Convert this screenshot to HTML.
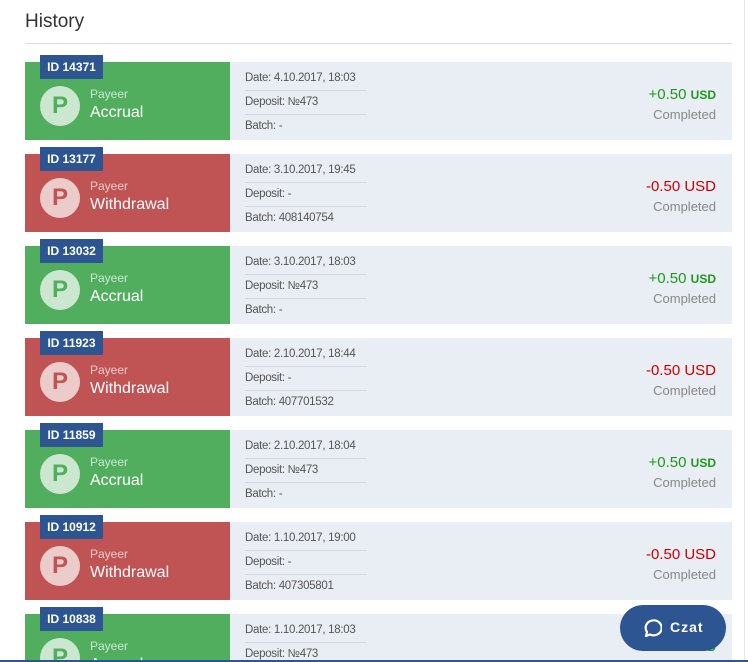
<!DOCTYPE html><html style="overflow:hidden;width:748px;height:662px"><head><style>
body{margin:0;width:748px;height:662px;overflow:hidden;background:#fff;font-family:"Liberation Sans",sans-serif;position:relative}
.vl{position:absolute;left:744px;top:0;width:1px;height:662px;background:#e6e6e6}
h1{position:absolute;left:25px;top:11px;margin:0;font-size:19px;font-weight:normal;color:#333}
.hr{position:absolute;left:25px;top:43px;width:707px;height:1px;background:#d8dce0}
.row{position:absolute;left:25px;width:707px;height:78px;background:#e9edf4}
.lb{position:absolute;left:0;top:0;width:205px;height:78px}
.g{background:#50ae5e}.r{background:#c05353}
.id{position:absolute;left:15px;top:-7px;width:63px;height:24px;background:#2d5591;color:#fff;font-size:12px;font-weight:bold;line-height:24px;text-align:center}
.c{position:absolute;left:15px;top:24px;width:40px;height:40px;border-radius:50%;background:rgba(255,255,255,.7);font-size:24px;font-weight:bold;text-align:center;line-height:40px}
.g .c{color:#50ae5e}.r .c{color:#c05353}
.p1{position:absolute;left:65px;top:25px;font-size:12px;color:rgba(255,255,255,.7)}
.p2{position:absolute;left:65px;top:42px;font-size:16px;color:#fff}
.d{position:absolute;left:220px;width:122px;font-size:11.5px;letter-spacing:-0.3px;white-space:nowrap;color:#555;height:24px;line-height:24px}
.d1{top:4px;border-bottom:1px solid #d6d9de}.d2{top:28px;border-bottom:1px solid #d6d9de}.d3{top:52px}
.am{position:absolute;right:16px;top:24px;font-size:15px}
.am small{font-size:12px;font-weight:bold}
.pos{color:#1c9a1c}.neg{color:#c00}
.st{position:absolute;right:16px;top:45px;font-size:13px;color:#888}
.chat{position:absolute;left:620px;top:605px;width:106px;height:46px;border-radius:23px;background:#2d5591;color:#fff;font-weight:bold;font-size:14px}
.bl{position:absolute;left:0;top:660px;width:748px;height:2px;background:#2d5591}
</style></head><body>
<div class="vl"></div>
<h1>History</h1><div class="hr"></div>

<div class="row" style="top:62px"><div class="lb g"><div class="id">ID 14371</div><div class="c">P</div><div class="p1">Payeer</div><div class="p2">Accrual</div></div><div class="d d1">Date: 4.10.2017, 18:03</div><div class="d d2">Deposit: №473</div><div class="d d3">Batch: -</div><div class="am pos">+0.50 <small>USD</small></div><div class="st">Completed</div></div>

<div class="row" style="top:154px"><div class="lb r"><div class="id">ID 13177</div><div class="c">P</div><div class="p1">Payeer</div><div class="p2">Withdrawal</div></div><div class="d d1">Date: 3.10.2017, 19:45</div><div class="d d2">Deposit: -</div><div class="d d3">Batch: 408140754</div><div class="am neg">-0.50 USD</div><div class="st">Completed</div></div>

<div class="row" style="top:246px"><div class="lb g"><div class="id">ID 13032</div><div class="c">P</div><div class="p1">Payeer</div><div class="p2">Accrual</div></div><div class="d d1">Date: 3.10.2017, 18:03</div><div class="d d2">Deposit: №473</div><div class="d d3">Batch: -</div><div class="am pos">+0.50 <small>USD</small></div><div class="st">Completed</div></div>

<div class="row" style="top:338px"><div class="lb r"><div class="id">ID 11923</div><div class="c">P</div><div class="p1">Payeer</div><div class="p2">Withdrawal</div></div><div class="d d1">Date: 2.10.2017, 18:44</div><div class="d d2">Deposit: -</div><div class="d d3">Batch: 407701532</div><div class="am neg">-0.50 USD</div><div class="st">Completed</div></div>

<div class="row" style="top:430px"><div class="lb g"><div class="id">ID 11859</div><div class="c">P</div><div class="p1">Payeer</div><div class="p2">Accrual</div></div><div class="d d1">Date: 2.10.2017, 18:04</div><div class="d d2">Deposit: №473</div><div class="d d3">Batch: -</div><div class="am pos">+0.50 <small>USD</small></div><div class="st">Completed</div></div>

<div class="row" style="top:522px"><div class="lb r"><div class="id">ID 10912</div><div class="c">P</div><div class="p1">Payeer</div><div class="p2">Withdrawal</div></div><div class="d d1">Date: 1.10.2017, 19:00</div><div class="d d2">Deposit: -</div><div class="d d3">Batch: 407305801</div><div class="am neg">-0.50 USD</div><div class="st">Completed</div></div>

<div class="row" style="top:614px"><div class="lb g"><div class="id">ID 10838</div><div class="c">P</div><div class="p1">Payeer</div><div class="p2">Accrual</div></div><div class="d d1">Date: 1.10.2017, 18:03</div><div class="d d2">Deposit: №473</div><div class="d d3">Batch: -</div><div class="am pos">+0.50 <small>USD</small></div></div>

<div class="chat"><svg style="position:absolute;left:22px;top:13px" width="20" height="20" viewBox="0 0 20 20"><path d="M4 18 L5 14 A8 7.5 0 1 1 8 16.5 Z" fill="none" stroke="#fff" stroke-width="2.2" stroke-linejoin="round"/></svg><span style="position:absolute;left:50px;top:14px;letter-spacing:1px">Czat</span></div>
<div class="bl"></div>
</body></html>
